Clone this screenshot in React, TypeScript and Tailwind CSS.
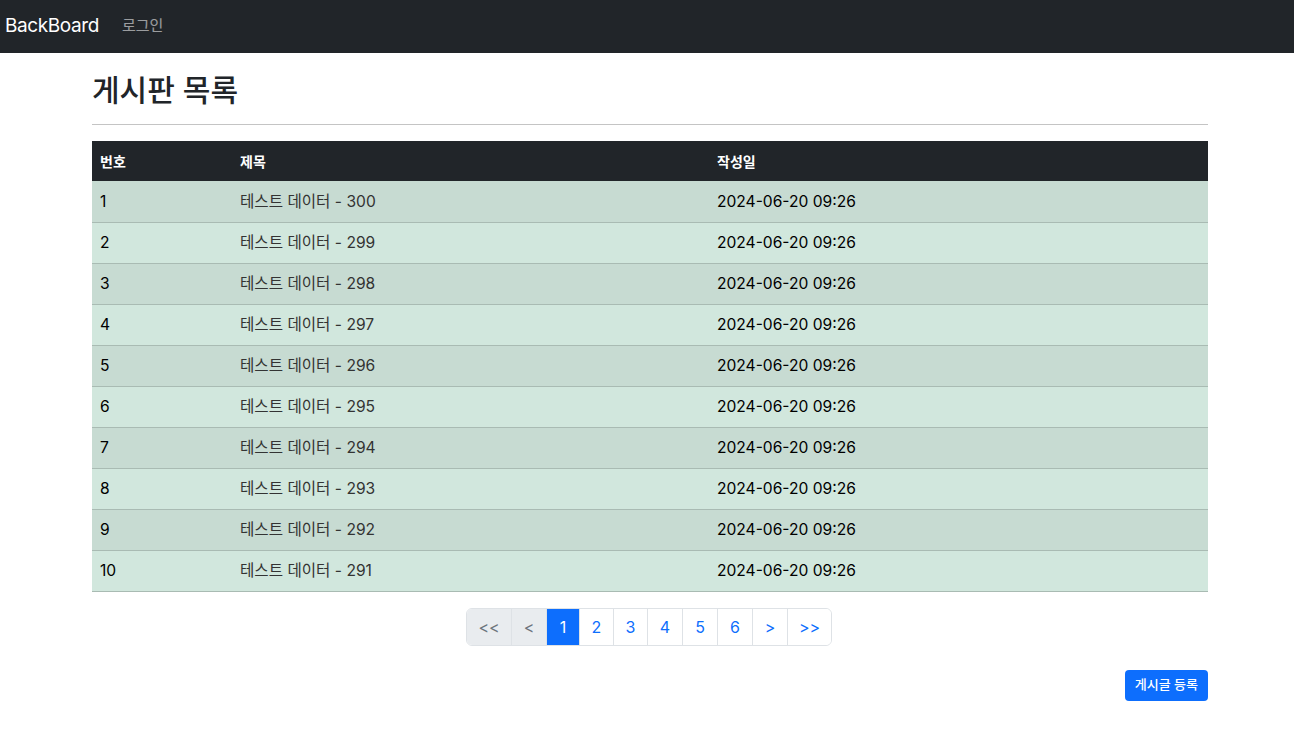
const rows = Array.from({ length: 10 }, (_, i) => ({
  id: i + 1,
  title: `테스트 데이터 - ${300 - i}`,
  date: '2024-06-20 09:26',
}));

const pages = ['<<', '<', '1', '2', '3', '4', '5', '6', '>', '>>'];
const pageWidths = ['w-[44px]', 'w-[35px]', 'w-[33px]', 'w-[34px]', 'w-[34px]', 'w-[35px]', 'w-[35px]', 'w-[35px]', 'w-[35px]', 'w-[44px]'];

export default function App() {
  return (
    <div className="min-h-screen bg-white font-['Inter','Noto_Sans_CJK_KR',sans-serif] text-[#212529]">
      {/* 상단 네비게이션 */}
      <nav className="h-[53px] bg-[#212529] flex items-center">
        <a className="ml-[5px] text-[19px] text-white tracking-[-0.4px]">BackBoard</a>
        <a className="ml-[23px] text-[15px] text-white/55">로그인</a>
      </nav>

      <div className="ml-[92px] mr-[86px]">
        <h2 className="mt-[17px] text-[30px] font-medium leading-[40px] text-[#212529]">게시판 목록</h2>
        <hr className="mt-[14px] border-t border-[#c4c4c4]" />

        <table className="mt-[16px] w-full border-collapse text-[15.6px]">
          <thead>
            <tr className="bg-[#212529] text-white h-[40px]">
              <th className="w-[140px] px-2 text-left text-[14px] font-bold">번호</th>
              <th className="w-[477px] px-2 text-left text-[14px] font-bold">제목</th>
              <th className="px-2 text-left text-[14px] font-bold">작성일</th>
            </tr>
          </thead>
          <tbody>
            {rows.map((r, i) => (
              <tr
                key={r.id}
                className={`h-[41px] border-b border-[#a9bbb3] ${i % 2 === 0 ? 'bg-[#c7dbd2]' : 'bg-[#d1e7dd]'}`}
              >
                <td className="px-2 pt-[1px] text-black">{r.id}</td>
                <td className="px-2 pt-[1px] text-[#333]">{r.title}</td>
                <td className="px-2 pt-[1px] text-black">{r.date}</td>
              </tr>
            ))}
          </tbody>
        </table>

        {/* 페이지네이션 */}
        <div className="mt-[16px] flex justify-center">
          <div className="-ml-[2px] flex h-[38px] rounded-[6px] border border-[#dee2e6] overflow-hidden">
            {pages.map((p, i) => {
              const disabled = i < 2;
              const active = p === '1';
              return (
                <span
                  key={i}
                  className={`${pageWidths[i]} flex items-center justify-center text-[16px] ${i > 0 ? 'border-l border-[#dee2e6]' : ''} ${
                    disabled
                      ? 'bg-[#e9ecef] text-[#6c757d]'
                      : active
                      ? 'bg-[#0d6efd] text-white border-[#0d6efd]'
                      : 'bg-white text-[#0d6efd]'
                  }`}
                >
                  {p}
                </span>
              );
            })}
          </div>
        </div>

        <div className="mt-[24px] flex justify-end">
          <button className="h-[31px] px-[10px] rounded-[4px] bg-[#0d6efd] text-white text-[13px] font-medium">
            게시글 등록
          </button>
        </div>
      </div>
    </div>
  );
}
